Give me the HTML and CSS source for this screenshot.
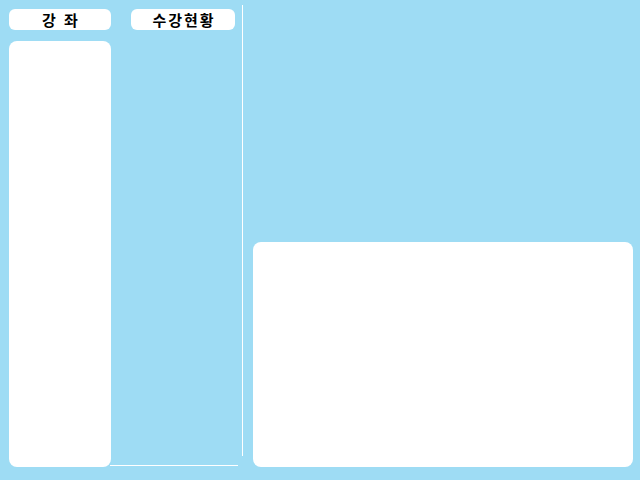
FILE: index.html
```html
<!DOCTYPE html>
<html lang="ko">
<head>
    <meta charset="UTF-8">
    <title>수강</title>
    <link rel="stylesheet" href="styles.css">
</head>
<body>

<div id="layout">
    <div id="course-col">
        <div class="tab">강 좌</div>
        <div id="course-list" class="panel"></div>
    </div>

    <div id="status-col">
        <div class="tab">수강현황</div>
        <div class="bottom-line"></div>
    </div>

    <div class="divider"></div>

    <div id="detail-col">
        <div id="detail" class="panel"></div>
    </div>
</div>

</body>
</html>
```

FILE: styles.css
```css
/* Page */
body {
    margin: 0;
    padding: 0;
    background-color: #9edcf4;
    font-family: "Noto Sans CJK KR", "Noto Sans", sans-serif;
    overflow: hidden;
}

#layout {
    display: flex;
    height: 480px;
}

/* Tabs */
.tab {
    height: 21px;
    line-height: 21px;
    background-color: #fff;
    border-radius: 6px;
    text-align: center;
    font-size: 15px;
    font-weight: bold;
    letter-spacing: 2px;
    padding-left: 2px; /* balance trailing letter-spacing */
    box-sizing: border-box;
    color: #000;
}

.panel {
    background-color: #fff;
    border-radius: 8px;
}

/* Course column */
#course-col {
    width: 102px;
    margin-left: 9px;
    padding-top: 9px;
}

#course-list {
    margin-top: 11px;
    height: 426px;
}

/* Status column */
#status-col {
    width: 131px;
    padding: 9px 0 0 20px;
    display: flex;
    flex-direction: column;
    box-sizing: border-box;
}

#status-col .tab {
    width: 104px;
}

.bottom-line {
    margin-top: auto;
    margin-left: -21px;
    margin-bottom: 14px;
    width: 128px;
    height: 1px;
    background-color: #fff;
}

.divider {
    width: 1px;
    height: 451px;
    margin-top: 5px;
    background-color: #fff;
}

/* Detail area */
#detail-col {
    margin-left: 10px;
    display: flex;
    flex-direction: column;
}

#detail {
    margin-top: auto;
    margin-bottom: 13px;
    width: 380px;
    height: 225px;
}
```
